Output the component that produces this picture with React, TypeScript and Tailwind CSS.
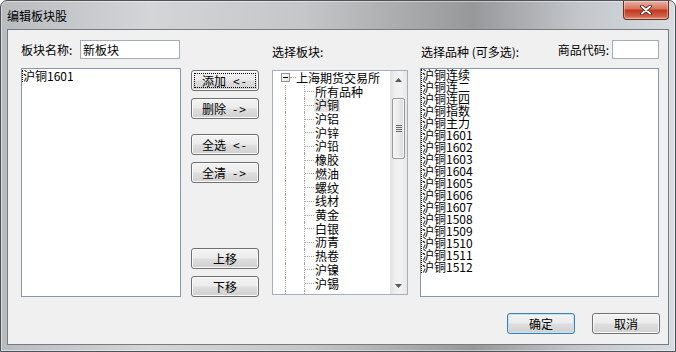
import type { ReactNode } from 'react';
import clsx from 'clsx';

const rightItems = [
  '沪铜连续',
  '沪铜连二',
  '沪铜连四',
  '沪铜指数',
  '沪铜主力',
  '沪铜1601',
  '沪铜1602',
  '沪铜1603',
  '沪铜1604',
  '沪铜1605',
  '沪铜1606',
  '沪铜1607',
  '沪铜1508',
  '沪铜1509',
  '沪铜1510',
  '沪铜1511',
  '沪铜1512',
];

const treeItems = [
  '所有品种',
  '沪铜',
  '沪铝',
  '沪锌',
  '沪铅',
  '橡胶',
  '燃油',
  '螺纹',
  '线材',
  '黄金',
  '白银',
  '沥青',
  '热卷',
  '沪镍',
  '沪锡',
  '',
];

function WinButton({
  label,
  arrow,
  focused = false,
  isDefault = false,
}: {
  label: string;
  arrow?: ReactNode;
  focused?: boolean;
  isDefault?: boolean;
}) {
  return (
    <div
      className={clsx(
        'h-[21px] w-[68px] shrink-0 rounded-[3px] border p-[2px]',
        'bg-[linear-gradient(180deg,#f3f3f3_0%,#ececec_46%,#dedede_54%,#d0d0d0_100%)]',
        isDefault
          ? 'border-[#3c7fb1] shadow-[inset_0_0_0_1px_#bfe3f7]'
          : 'border-[#707070] shadow-[inset_0_0_0_1px_#fbfbfb]',
      )}
    >
      <div
        className={clsx(
          'flex h-full items-center justify-center text-[12px] leading-[12px]',
          focused && 'border border-dotted border-black',
        )}
      >
        <span>{label}</span>
        {arrow && <span className="ml-[7px] tracking-[2px]">{arrow}</span>}
      </div>
    </div>
  );
}

function Arrow({ up }: { up?: boolean }) {
  return (
    <svg width="7" height="4" viewBox="0 0 7 4">
      <polygon points={up ? '0,4 3.5,0 7,4' : '0,0 3.5,4 7,0'} fill="#5a5a5a" />
    </svg>
  );
}

function ScrollBar() {
  return (
    <div className="flex w-[17px] shrink-0 flex-col bg-[linear-gradient(90deg,#e2e2e2_0%,#eeeeee_30%,#f2f2f2_60%,#e8e8e8_100%)]">
      <div className="flex h-[17px] items-center justify-center">
        <Arrow up />
      </div>
      <div className="mx-[2px] mt-[10px] flex h-[61px] flex-col items-center justify-center gap-[1px] rounded-[2px] border border-[#979797] bg-[linear-gradient(90deg,#f4f4f4_0%,#ebebeb_50%,#d9d9d9_100%)] shadow-[inset_0_0_0_1px_#fafafa]">
        {[0, 1, 2, 3].map((i) => (
          <div key={i} className="h-[1px] w-[6px] bg-[#6b6b6b]" />
        ))}
      </div>
      <div className="flex-1" />
      <div className="flex h-[17px] items-center justify-center">
        <Arrow />
      </div>
    </div>
  );
}

function TreeView() {
  return (
    <div className="mt-[11px] flex h-[225px] w-[136px] border border-[#a3afbe] bg-white">
      <div className="flex-1 overflow-hidden">
        <div className="flex h-[13.73px] items-center">
          <div className="w-[8px] shrink-0" />
          <div className="flex h-[9px] w-[9px] shrink-0 items-center justify-center border border-[#919191] bg-[linear-gradient(135deg,#ffffff_0%,#e2e2e2_100%)]">
            <div className="h-[1px] w-[5px] bg-black" />
          </div>
          <div className="w-[6px] shrink-0 border-t border-dotted border-[#a0a0a0]" />
          <span className="whitespace-nowrap">上海期货交易所</span>
        </div>
        {treeItems.map((name, i) => (
          <div key={i} className="flex h-[13.73px]">
            <div className="w-[12px] shrink-0" />
            <div className="w-[19px] shrink-0 border-l border-dotted border-[#a0a0a0]" />
            <div className="flex w-[10px] shrink-0 items-center border-l border-dotted border-[#a0a0a0]">
              {name && <div className="w-[9px] border-t border-dotted border-[#a0a0a0]" />}
            </div>
            {name && (
              <span className={clsx('flex items-center px-px', i === 1 && 'bg-[#e6e6e6]')}>{name}</span>
            )}
          </div>
        ))}
      </div>
      <ScrollBar />
    </div>
  );
}

export default function App() {
  return (
    <div className="h-[352px] w-[676px] overflow-hidden bg-white font-['Noto_Sans_CJK_SC','Liberation_Sans',sans-serif] text-[12px] leading-[12px] text-black">
      <div className="flex h-full w-full flex-col rounded-t-[7px] border border-[#4f5357] bg-[linear-gradient(90deg,#b9bcbf_0%,#d3d5d7_22%,#c4c6c8_45%,#97989a_70%,#c3c7cb_86%,#d7dce1_100%)] shadow-[inset_0_0_0_1px_rgba(255,255,255,0.45)]">
        <div className="flex h-[28px] shrink-0 items-start justify-between">
          <div className="pl-[6px] pt-[8px] text-[12px] leading-[14px]">编辑板块股</div>
          <div className="mr-[6px] flex h-[19px] w-[46px] items-center justify-center rounded-b-[4px] border border-t-0 border-[#6b2d22] bg-[linear-gradient(180deg,#eab2a5_0%,#d9745d_42%,#c13a1f_52%,#cf6248_85%,#e09a82_100%)] shadow-[inset_0_0_0_1px_rgba(255,255,255,0.35)]">
            <svg width="12" height="10" viewBox="0 0 12 10">
              <path d="M2 1.5 L10 8.5 M10 1.5 L2 8.5" stroke="#3b1c16" strokeWidth="3.6" strokeLinecap="round" />
              <path d="M2 1.5 L10 8.5 M10 1.5 L2 8.5" stroke="#ffffff" strokeWidth="2" strokeLinecap="round" />
            </svg>
          </div>
        </div>

        <div className="ml-[6px] flex h-[316px] w-[662px] shrink-0 flex-col border border-[#767b81] bg-[#f0f0f0] pl-[13px] pt-[10px]">
          <div className="flex h-[257px]">
            {/* 板块名称 + 已选列表 */}
            <div className="flex w-[160px] flex-col">
              <div className="flex h-[19px] items-center">
                <span className="w-[59px]">板块名称:</span>
                <div className="flex h-[19px] w-[100px] items-center border border-[#a4adb8] bg-white pl-[2px]">新板块</div>
              </div>
              <div className="mt-[9px] h-[229px] border border-[#8797aa] bg-white pt-px">
                <div className="w-fit border-l border-dotted border-black">
                  <div className="h-[12px]">沪铜1601</div>
                </div>
              </div>
            </div>

            {/* 操作按钮 */}
            <div className="ml-[10px] flex w-[68px] flex-col pt-[30px]">
              <WinButton label="添加" arrow="<-" focused />
              <div className="mt-[7px]">
                <WinButton label="删除" arrow="->" />
              </div>
              <div className="mt-[15px]">
                <WinButton label="全选" arrow="<-" />
              </div>
              <div className="mt-[7px]">
                <WinButton label="全清" arrow="->" />
              </div>
              <div className="mt-[65px]">
                <WinButton label="上移" />
              </div>
              <div className="mt-[7px]">
                <WinButton label="下移" />
              </div>
            </div>

            {/* 选择板块 */}
            <div className="ml-[13px] flex w-[136px] flex-col">
              <div className="flex h-[19px] items-center pt-[5px]">选择板块:</div>
              <TreeView />
            </div>

            {/* 选择品种 */}
            <div className="ml-[12px] flex w-[239px] flex-col">
              <div className="flex h-[19px] items-center justify-between">
                <span className="pl-px pt-[5px]">选择品种 (可多选):</span>
                <div className="flex items-center">
                  <span className="mr-[3px]">商品代码:</span>
                  <div className="h-[19px] w-[47px] border border-[#a4adb8] bg-white" />
                </div>
              </div>
              <div className="mt-[9px] h-[229px] overflow-hidden border border-[#8797aa] bg-white">
                <div className="w-fit border-l border-dotted border-black">
                  {rightItems.map((item) => (
                    <div key={item} className="h-[12px] leading-[12px]">
                      {item}
                    </div>
                  ))}
                </div>
              </div>
            </div>
          </div>

          <div className="mt-[16px] flex justify-end gap-[17px] pr-[8px]">
            <WinButton label="确定" isDefault />
            <WinButton label="取消" />
          </div>
        </div>
      </div>
    </div>
  );
}
